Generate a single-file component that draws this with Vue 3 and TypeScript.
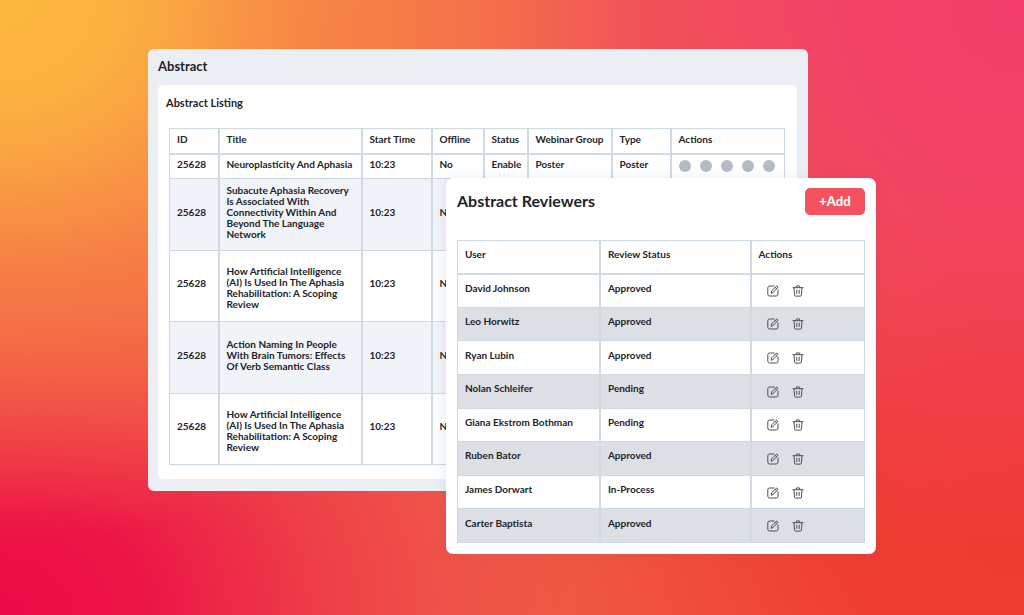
<script setup lang="ts">
interface Abstract {
  id: string
  title: string
  time: string
  offline: string
  status?: string
  group?: string
  type?: string
  actions?: number
}

interface Reviewer {
  name: string
  status: string
}

const listingColumns: string[] = ['ID', 'Title', 'Start Time', 'Offline', 'Status', 'Webinar Group', 'Type', 'Actions']

const base = { id: '25628', time: '10:23', offline: 'No' }
const aiTitle = 'How Artificial Intelligence (AI) Is Used In The Aphasia Rehabilitation: A Scoping Review'

const abstracts: Abstract[] = [
  { ...base, title: 'Neuroplasticity And Aphasia', status: 'Enable', group: 'Poster', type: 'Poster', actions: 5 },
  { ...base, title: 'Subacute Aphasia Recovery Is Associated With Connectivity Within And Beyond The Language Network' },
  { ...base, title: aiTitle },
  { ...base, title: 'Action Naming In People With Brain Tumors: Effects Of Verb Semantic Class' },
  { ...base, title: aiTitle },
]

const reviewers: Reviewer[] = [
  { name: 'David Johnson', status: 'Approved' },
  { name: 'Leo Horwitz', status: 'Approved' },
  { name: 'Ryan Lubin', status: 'Approved' },
  { name: 'Nolan Schleifer', status: 'Pending' },
  { name: 'Giana Ekstrom Bothman', status: 'Pending' },
  { name: 'Ruben Bator', status: 'Approved' },
  { name: 'James Dorwart', status: 'In-Process' },
  { name: 'Carter Baptista', status: 'Approved' },
]
</script>

<template>
  <main class="stage">
    <section class="panel">
      <h1>Abstract</h1>
      <div class="card">
        <h2>Abstract Listing</h2>
        <table class="listing">
          <colgroup>
            <col class="c-id" /><col class="c-title" /><col class="c-time" /><col class="c-offline" />
            <col class="c-status" /><col class="c-group" /><col class="c-type" /><col class="c-actions" />
          </colgroup>
          <thead>
            <tr>
              <th v-for="column in listingColumns" :key="column" scope="col">{{ column }}</th>
            </tr>
          </thead>
          <tbody>
            <tr v-for="(item, index) in abstracts" :key="index">
              <td>{{ item.id }}</td>
              <td class="wrap">{{ item.title }}</td>
              <td>{{ item.time }}</td>
              <td>{{ item.offline }}</td>
              <td>{{ item.status }}</td>
              <td>{{ item.group }}</td>
              <td>{{ item.type }}</td>
              <td>
                <div v-if="item.actions" class="dots">
                  <button v-for="n in item.actions" :key="n" type="button" class="dot" :aria-label="`Action ${n}`"></button>
                </div>
              </td>
            </tr>
          </tbody>
        </table>
      </div>
    </section>

    <section class="dialog">
      <header>
        <h2>Abstract Reviewers</h2>
        <button type="button" class="add">+Add</button>
      </header>
      <table class="reviewers">
        <colgroup>
          <col class="r-user" /><col class="r-status" /><col class="r-actions" />
        </colgroup>
        <thead>
          <tr>
            <th scope="col">User</th>
            <th scope="col">Review Status</th>
            <th scope="col">Actions</th>
          </tr>
        </thead>
        <tbody>
          <tr v-for="reviewer in reviewers" :key="reviewer.name">
            <td>{{ reviewer.name }}</td>
            <td>{{ reviewer.status }}</td>
            <td class="tools">
              <div>
                <button type="button" :aria-label="`Edit ${reviewer.name}`">
                  <svg viewBox="0 0 12 12" width="12" height="12">
                    <path d="M7.200 1H2.600Q.8 1 .8 2.800v6.400Q.8 11 2.600 11H9.200Q11 11 11 9.200V5" />
                    <path d="M4.200 7.900 4.700 5.900 9 1.500Q9.700.9 10.400 1.500T10.500 3L6.200 7.300ZM8.200 2.400l1.400 1.400" />
                  </svg>
                </button>
                <button type="button" :aria-label="`Delete ${reviewer.name}`">
                  <svg viewBox="0 0 12 12" width="12" height="12">
                    <path d="M1 2.700h10M4 2.500 4.600.9h2.800L8 2.500M2 3l.6 7.200q.1.900 1 .9h4.800q.9 0 1-.9L10 3M4.800 5.200v3.300M7.200 5.200v3.300" />
                  </svg>
                </button>
              </div>
            </td>
          </tr>
        </tbody>
      </table>
    </section>
  </main>
</template>

<style>
body {
  margin: 0;
}
</style>

<style scoped>
.stage {
  box-sizing: border-box;
  min-height: 100vh;
  display: grid;
  grid-template-columns: 148fr 298fr 362fr 68fr 148fr;
  align-items: start;
  color: #1e2329;
  font-family: Lato, "Open Sans", sans-serif;
  font-size: 10px;
  font-weight: 700;
  line-height: 11px;
  background:
    radial-gradient(ellipse 62% 88% at 0% 0%, #fcb83e 0%, #fbb040 20%, rgba(249, 145, 68, 0.75) 48%, rgba(246, 120, 70, 0) 100%),
    radial-gradient(ellipse 56% 75% at 0% 100%, #ec0a46 0%, #ec1546 25%, rgba(236, 45, 70, 0.65) 58%, rgba(240, 80, 72, 0) 100%),
    radial-gradient(ellipse 60% 90% at 100% 0%, #f23d6a 0%, rgba(242, 64, 104, 0.92) 30%, rgba(242, 75, 95, 0) 100%),
    radial-gradient(ellipse 58% 80% at 100% 85%, #ee3b31 0%, rgba(238, 60, 50, 0.95) 32%, rgba(238, 75, 65, 0) 100%),
    #f1654a;
}

h1,
h2 {
  margin: 0;
}

button {
  padding: 0;
  border: 0;
  font: inherit;
  cursor: pointer;
}

table {
  width: 100%;
  table-layout: fixed;
  border-collapse: collapse;
}

th,
td {
  padding: 0 0 0 7px;
  border: 1px solid #ccd8e2;
  text-align: left;
  vertical-align: middle;
  white-space: nowrap;
  font-weight: 700;
}

th:not(:last-child),
td:not(:last-child) {
  border-right: 2px solid #cfdae4;
}

thead th {
  border-bottom: 2px solid #cfdae4;
}

.panel {
  grid-area: 1 / 2 / 2 / 4;
  margin-top: 49px;
  padding: 9px 11px 12px 10px;
  border-radius: 6px;
  background: #ebeff4;
}

.panel h1 {
  padding-bottom: 11px;
  font-size: 13px;
  line-height: 16px;
}

.card {
  padding: 10px 12px 14px 11px;
  border-radius: 5px;
  background: #fff;
}

.card h2 {
  margin: 0 -3px 17px;
  font-size: 11px;
  line-height: 16px;
}

.listing {
  height: 337px;
}

.listing th,
.listing td {
  padding-bottom: 4px;
}

.listing th {
  padding-bottom: 2px;
}

.listing td:last-child {
  padding-bottom: 0;
}

.listing thead tr,
.listing tbody tr:first-child {
  height: 25px;
}

.listing tbody tr {
  height: 71px;
}

.listing tbody tr:nth-child(even) {
  background: #f0f4f8;
}

.listing .wrap {
  white-space: normal;
}

.listing tbody tr:first-child .wrap {
  white-space: nowrap;
}

.listing tbody tr:not(:first-child) .wrap {
  padding-right: 8px;
}

.listing tbody tr:nth-child(odd):not(:first-child) .wrap {
  padding-top: 8px;
}

.c-id { width: 49px; }
.c-title { width: 143px; }
.c-time { width: 70px; }
.c-offline { width: 52px; }
.c-status { width: 44px; }
.c-group { width: 84px; }
.c-type { width: 59px; }

.dots {
  display: flex;
  gap: 9px;
}

.dot {
  width: 12px;
  height: 12px;
  border-radius: 50%;
  background: #b3bbc6;
}

.dialog {
  grid-area: 1 / 3 / 2 / 5;
  margin-top: 178px;
  padding: 10px 11px 11px;
  border-radius: 7px;
  background: #fff;
  box-shadow: -2px 0 12px rgba(80, 100, 120, 0.12);
}

.dialog header {
  display: flex;
  align-items: center;
  justify-content: space-between;
  margin-bottom: 25px;
}

.dialog h2 {
  padding-bottom: 2px;
  font-size: 16px;
  line-height: 20px;
}

.add {
  width: 60px;
  height: 27px;
  padding-bottom: 2px;
  border-radius: 5px;
  background: #f5515f;
  color: #fff;
  font-size: 13px;
  font-weight: 900;
  line-height: 16px;
}

.reviewers {
  height: 303px;
}

.reviewers tr {
  height: 33px;
}

.reviewers th,
.reviewers td {
  padding-bottom: 5px;
}

.reviewers tbody tr:nth-child(even) {
  background: #dce0e5;
}

.r-user { width: 35%; }
.r-status { width: 37%; }
.r-actions { width: 28%; }

.reviewers .tools {
  padding: 1px 0 0 15px;
}

.tools div {
  display: flex;
  gap: 13px;
}

.tools button {
  width: 12px;
  height: 12px;
  background: none;
}

.tools svg {
  display: block;
  fill: none;
  stroke: #4a5058;
  stroke-linecap: round;
  stroke-linejoin: round;
}
</style>
